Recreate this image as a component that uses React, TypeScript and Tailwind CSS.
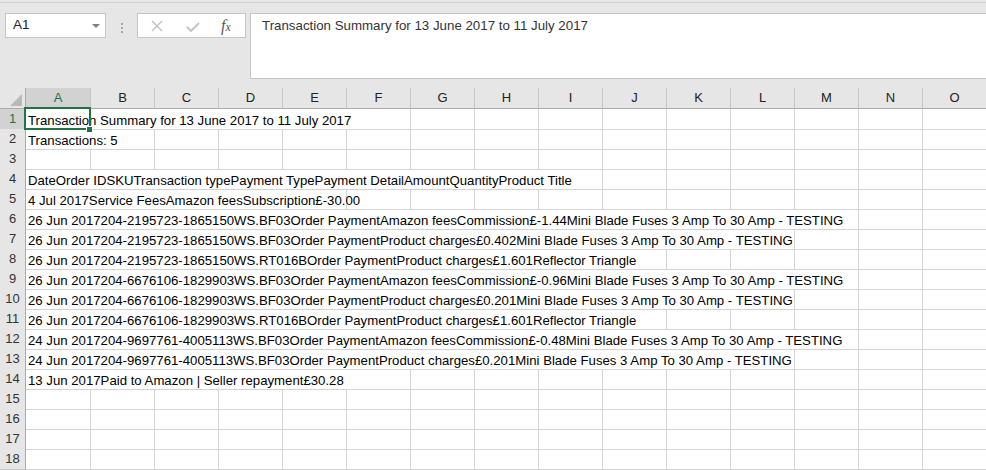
import React from "react";

type Row = { n: number; text?: string; span?: string };

const rows: Row[] = [
  { n: 1, text: "Transaction Summary for 13 June 2017 to 11 July 2017", span: "col-span-6" },
  { n: 2, text: "Transactions: 5", span: "col-span-2" },
  { n: 3 },
  { n: 4, text: "DateOrder IDSKUTransaction typePayment TypePayment DetailAmountQuantityProduct Title", span: "col-span-9" },
  { n: 5, text: "4 Jul 2017Service FeesAmazon feesSubscription£-30.00", span: "col-span-5" },
  { n: 6, text: "26 Jun 2017204-2195723-1865150WS.BF03Order PaymentAmazon feesCommission£-1.44Mini Blade Fuses 3 Amp To 30 Amp - TESTING", span: "col-span-13" },
  { n: 7, text: "26 Jun 2017204-2195723-1865150WS.BF03Order PaymentProduct charges£0.402Mini Blade Fuses 3 Amp To 30 Amp - TESTING", span: "col-span-12" },
  { n: 8, text: "26 Jun 2017204-2195723-1865150WS.RT016BOrder PaymentProduct charges£1.601Reflector Triangle", span: "col-span-10" },
  { n: 9, text: "26 Jun 2017204-6676106-1829903WS.BF03Order PaymentAmazon feesCommission£-0.96Mini Blade Fuses 3 Amp To 30 Amp - TESTING", span: "col-span-13" },
  { n: 10, text: "26 Jun 2017204-6676106-1829903WS.BF03Order PaymentProduct charges£0.201Mini Blade Fuses 3 Amp To 30 Amp - TESTING", span: "col-span-12" },
  { n: 11, text: "26 Jun 2017204-6676106-1829903WS.RT016BOrder PaymentProduct charges£1.601Reflector Triangle", span: "col-span-10" },
  { n: 12, text: "24 Jun 2017204-9697761-4005113WS.BF03Order PaymentAmazon feesCommission£-0.48Mini Blade Fuses 3 Amp To 30 Amp - TESTING", span: "col-span-13" },
  { n: 13, text: "24 Jun 2017204-9697761-4005113WS.BF03Order PaymentProduct charges£0.201Mini Blade Fuses 3 Amp To 30 Amp - TESTING", span: "col-span-12" },
  { n: 14, text: "13 Jun 2017Paid to Amazon | Seller repayment£30.28", span: "col-span-6" },
  { n: 15 },
  { n: 16 },
  { n: 17 },
  { n: 18 },
];

const spanCount: Record<string, number> = {
  "col-span-2": 2,
  "col-span-5": 5,
  "col-span-6": 6,
  "col-span-9": 9,
  "col-span-10": 10,
  "col-span-12": 12,
  "col-span-13": 13,
};

const letters = ["A", "B", "C", "D", "E", "F", "G", "H", "I", "J", "K", "L", "M", "N", "O"];

const gridCols = "grid grid-cols-[26px_65px_repeat(14,64px)]";

function SheetRow({ row }: { row: Row }) {
  const used = row.span ? spanCount[row.span] : 0;
  const empties = 15 - used;
  const sel = row.n === 1;
  return (
    <div className={`${gridCols} h-[20px] bg-white`}>
      <div
        className={`flex items-center justify-center border-r border-b text-[13px] ${
          sel
            ? "bg-[#d2d2d2] text-[#217346] border-r-[#217346] border-b-[#c6c6c6]"
            : "bg-[#e6e6e6] text-[#333] border-r-[#ababab] border-b-[#c9c9c9]"
        }`}
      >
        {row.n}
      </div>
      {row.text && (
        <div
          className={`${row.span} relative z-[1] border-r border-b border-[#d4d4d4] pl-[2px] pt-[3px] leading-[17px] text-[13.2px] text-black whitespace-nowrap overflow-visible`}
        >
          {row.text}
        </div>
      )}
      {Array.from({ length: empties }).map((_, i) => (
        <div key={i} className="border-r border-b border-[#d4d4d4]" />
      ))}
    </div>
  );
}

export default function App() {
  return (
    <div className="w-[986px] h-[470px] overflow-hidden bg-[#e6e6e6] font-['Liberation_Sans',Arial,sans-serif]">
      {/* Formula bar area */}
      <div className="h-[88px] flex flex-col">
        <div className="h-[3px] border-b border-[#d2d2d2]" />
        <div className="flex items-start pt-[10px]">
          {/* Name box */}
          <div className="ml-[5px] w-[101px] h-[25px] bg-white border border-[#c6c6c6] flex items-center justify-between pl-[7px] pr-[5px]">
            <span className="text-[13.5px] text-[#222]">A1</span>
            <svg width="8" height="4" viewBox="0 0 8 4">
              <polygon points="0,0 8,0 4,4" fill="#7f7f7f" />
            </svg>
          </div>
          {/* Dots */}
          <div className="w-[31px] h-[25px] flex flex-col items-center justify-center gap-[2px] pt-[4px]">
            <div className="w-[2px] h-[2px] bg-[#a8a8a8]" />
            <div className="w-[2px] h-[2px] bg-[#a8a8a8]" />
            <div className="w-[2px] h-[2px] bg-[#a8a8a8]" />
          </div>
          {/* fx box */}
          <div className="w-[109px] h-[25px] bg-white border border-[#c6c6c6] flex items-center">
            <svg className="ml-[13px]" width="12" height="12" viewBox="0 0 12 12">
              <line x1="1" y1="1" x2="11" y2="11" stroke="#c2c2c2" strokeWidth="1.4" />
              <line x1="11" y1="1" x2="1" y2="11" stroke="#c2c2c2" strokeWidth="1.4" />
            </svg>
            <svg className="ml-[23px] mt-[2px]" width="14" height="10" viewBox="0 0 14 10">
              <polyline points="1,5 5,9 13,1" fill="none" stroke="#c2c2c2" strokeWidth="1.8" />
            </svg>
            <span className="ml-[21px] font-['Liberation_Serif',serif] italic text-[#555] text-[16px] leading-none">
              f<span className="text-[12px]">x</span>
            </span>
          </div>
          {/* Formula input */}
          <div className="ml-[4px] flex-1 mr-[-2px] h-[66px] bg-white border border-[#c6c6c6] pl-[11px] pt-[4px] text-[13.3px] leading-[16px] text-[#333]">
            Transaction Summary for 13 June 2017 to 11 July 2017
          </div>
        </div>
      </div>

      {/* Sheet */}
      <div className="relative">
        {/* Column headers */}
        <div className={`${gridCols} h-[21px]`}>
          <div className="bg-[#e6e6e6] border-r border-b border-r-[#ababab] border-b-[#ababab] flex items-end justify-end pr-[3px] pb-[2px]">
            <svg width="12" height="12" viewBox="0 0 12 12">
              <polygon points="12,0 12,12 0,12" fill="#b8b8b8" />
            </svg>
          </div>
          {letters.map((l) => (
            <div
              key={l}
              className={`flex items-center justify-center text-[13px] border-r border-b ${
                l === "A"
                  ? "bg-[#d2d2d2] text-[#217346] border-r-[#c6c6c6] border-b-[#217346]"
                  : "bg-[#e6e6e6] text-[#222] border-r-[#c6c6c6] border-b-[#ababab]"
              }`}
            >
              {l}
            </div>
          ))}
        </div>
        {rows.map((r) => (
          <SheetRow key={r.n} row={r} />
        ))}

        {/* Selection box on A1 */}
        <div className="absolute z-[2] left-[24px] top-[19px] w-[67px] h-[23px] border-2 border-[#217346] pointer-events-none" />
        <div className="absolute z-[2] left-[86px] top-[38px] w-[7px] h-[7px] bg-[#217346] border border-white pointer-events-none" />
      </div>
    </div>
  );
}
